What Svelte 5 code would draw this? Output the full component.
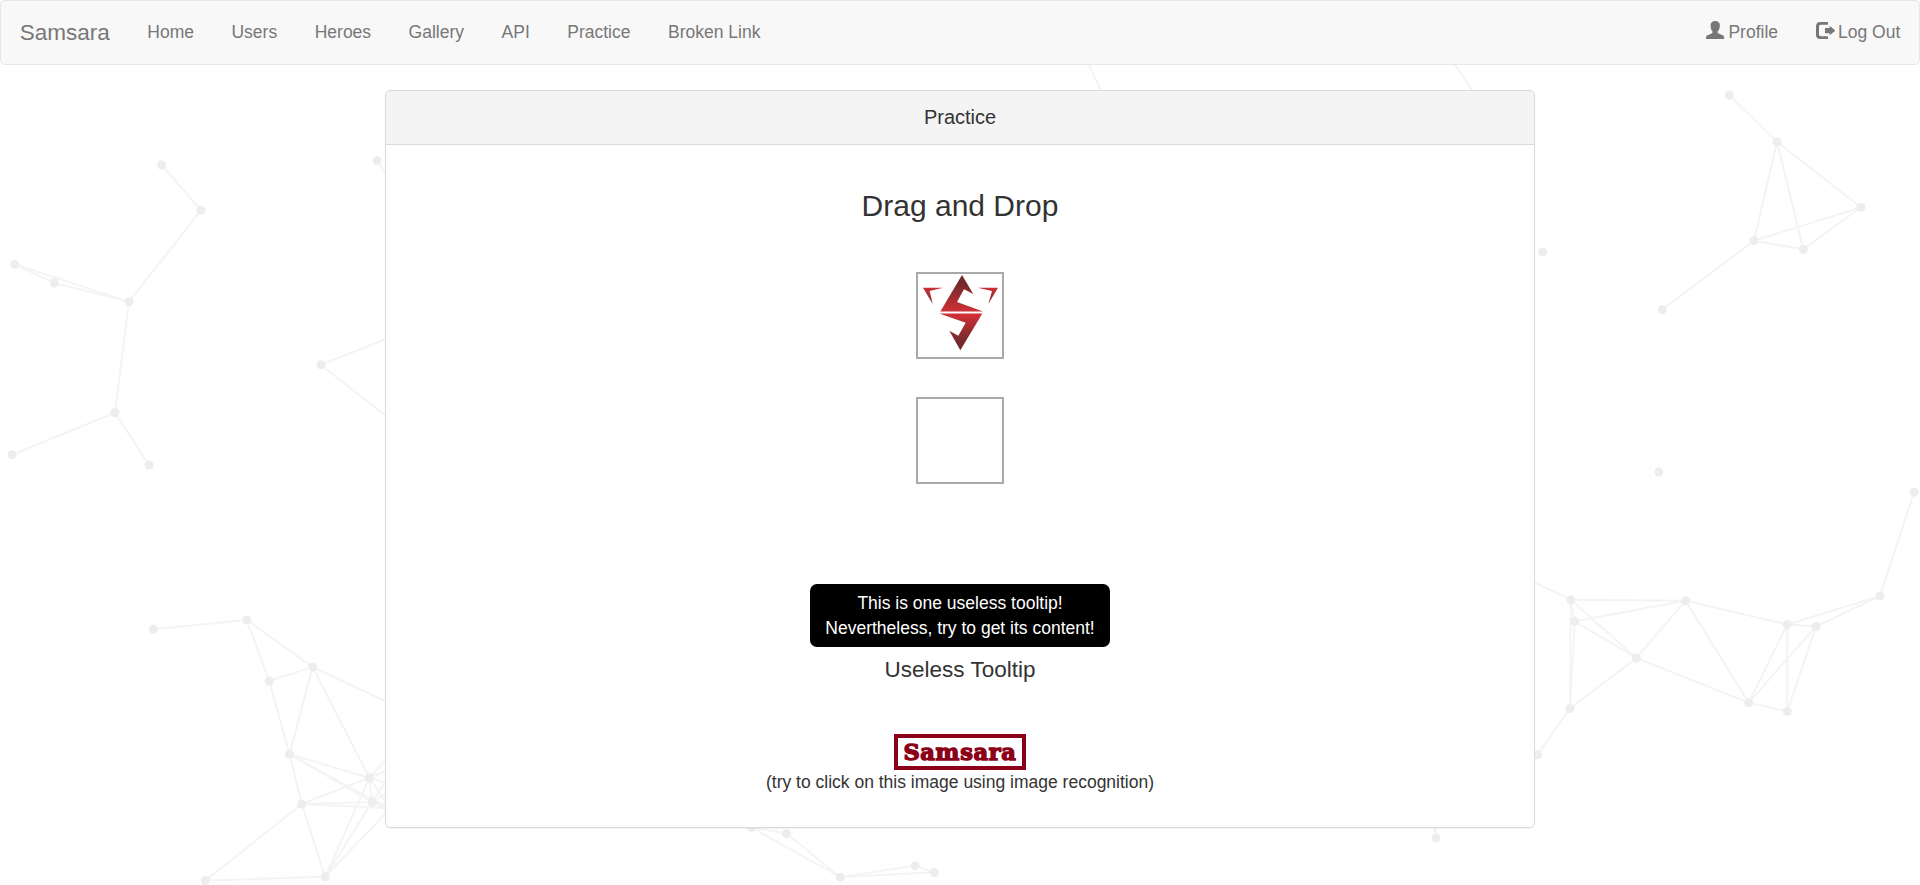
<script>
  const links = ['Home', 'Users', 'Heroes', 'Gallery', 'API', 'Practice', 'Broken Link'];

  const dots = [
    [161.7, 165], [201, 210.3], [129, 301.7], [54.3, 283], [14.7, 264.3], [115, 412.7], [12, 454.7], [149, 465],
    [377, 160.6], [321, 364.7],
    [153.3, 629.3], [246.8, 620], [312.7, 667], [269.2, 681], [289.5, 754.3], [369.3, 777.8], [301.7, 804],
    [372.2, 802], [325.2, 876.8], [205.3, 880.7],
    [1729.3, 95.3], [1777, 141.7], [1861, 207.3], [1754, 240.7], [1803.3, 249.3], [1662.3, 309.5], [1542.8, 252],
    [1658.7, 472], [1914, 492.3], [1880, 596], [1787.3, 624.5], [1816, 626.5], [1685.7, 600.7], [1570.7, 599.7],
    [1574.7, 621.3], [1636.3, 658], [1748.7, 702.7], [1787.3, 711.3], [1570, 708.5], [1537.5, 754.7],
    [751.5, 827.5], [786.5, 833.5], [840.3, 877.3], [915, 865.7], [934.3, 872.5], [1436, 838]
  ];

  const edges = [
    'M161.7 165L201 210.3L129 301.7L115 412.7L12 454.7M115 412.7L149 465M129 301.7L54.3 283L14.7 264.3L129 301.7',
    'M377 160.6L386 174M386 339L321 364.7L386 416',
    'M153.3 629.3L246.8 620L312.7 667L269.2 681L246.8 620',
    'M269.2 681L289.5 754.3L312.7 667L386 701.5M312.7 667L369.3 777.8',
    'M289.5 754.3L369.3 777.8L301.7 804L289.5 754.3L372.2 802L301.7 804',
    'M289.5 754.3L386 807M301.7 804L386 808',
    'M301.7 804L205.3 880.7L325.2 876.8L301.7 804',
    'M325.2 876.8L369.3 777.8L372.2 802L325.2 876.8L386 813',
    'M369.3 777.8L386 760M369.3 777.8L386 771M369.3 777.8L386 783M369.3 777.8L386 802',
    'M372.2 802L386 781M372.2 802L386 794M372.2 802L386 804M372.2 802L386 808',
    'M1729.3 95.3L1777 141.7L1861 207.3L1803.3 249.3L1777 141.7L1754 240.7L1861 207.3M1803.3 249.3L1754 240.7L1662.3 309.5',
    'M1534 582L1570.7 599.7L1685.7 600.7L1574.7 621.3L1570.7 599.7L1636.3 658L1574.7 621.3L1570 708.5L1570.7 599.7',
    'M1570 708.5L1636.3 658L1685.7 600.7L1748.7 702.7L1636.3 658M1570 708.5L1537.5 754.7',
    'M1685.7 600.7L1787.3 624.5L1816 626.5L1880 596L1914 492.3M1787.3 624.5L1880 596',
    'M1787.3 624.5L1748.7 702.7L1816 626.5L1787.3 711.3L1787.3 624.5M1748.7 702.7L1787.3 711.3',
    'M751.5 827.5L786.5 833.5L840 877L751.5 827.5M840 877L915 865.7L934 872.3L840 877',
    'M1088.4 64L1101.5 91M1454.500 64L1472.500 91M1433.5 827L1436 838L1435.5 827'
  ];
</script>

<svg class="network" viewBox="0 0 1920 885" aria-hidden="true">
  {#each edges as d}
    <path {d} />
  {/each}
  {#each dots as [cx, cy]}
    <circle {cx} {cy} r="4.5" />
  {/each}
</svg>

<div class="page">
  <nav class="navbar">
    <a class="brand" href="#home">Samsara</a>
    <ul class="nav">
      {#each links as label}
        <li><a href="#nav">{label}</a></li>
      {/each}
    </ul>
    <ul class="nav right">
      <li>
        <a href="#profile">
          <svg class="icon" viewBox="0 0 56 54"><path d="M28 0C35 0 42 4 42 13C42 21 39 28 35.500 31V35C37 38 46 40 51 43C55 46 55 49 55 54H0C0 49 0 46 4 43C9 40 18 38 19.500 35V31C16 28 14 21 14 13C14 4 21 0 28 0Z" /></svg>
          Profile
        </a>
      </li>
      <li>
        <a href="#logout">
          <svg class="icon out" viewBox="0 0 59 52"><path d="M36 0H13Q0 0 0 13V38Q0 51 13 51H36V43H14Q9 43 9 37V14Q9 8 14 8H36Z" /><path d="M27 18H41V11L59 26L41 40V34H27Z" /></svg>
          Log Out
        </a>
      </li>
    </ul>
  </nav>

  <main class="panel">
    <header>Practice</header>
    <div class="body">
      <h3>Drag and Drop</h3>
      <div class="box">
        <svg viewBox="114 72 252 249">
          <defs>
            <linearGradient id="red" gradientUnits="userSpaceOnUse" x1="0" y1="76" x2="0" y2="300">
              <stop offset="0.12" stop-color="#732a2d" />
              <stop offset="0.48" stop-color="#cf3036" />
              <stop offset="0.54" stop-color="#cf3036" />
              <stop offset="0.88" stop-color="#732a2d" />
            </linearGradient>
            <linearGradient id="ear" x1="0" y1="0" x2="0" y2="1">
              <stop offset="0" stop-color="#cb3036" />
              <stop offset="1" stop-color="#7d2a2e" />
            </linearGradient>
          </defs>
          <path fill="url(#red)" d="M246 75L280 132L252 118L231 156L309 184.500H181Z" />
          <path fill="url(#red)" d="M178 190.500H307L241 301L208 242L235 257L257 218Z" />
          <path fill="url(#ear)" d="M129 113H189L149 123L158 162Z" />
          <path fill="url(#ear)" d="M293 113H354L325 162L336 123Z" />
        </svg>
      </div>
      <div class="box second"></div>
      <div class="tooltip">This is one useless tooltip!<br />Nevertheless, try to get its content!</div>
      <h4>Useless Tooltip</h4>
      <div class="stamp"><span>Samsara</span></div>
      <p>(try to click on this image using image recognition)</p>
    </div>
  </main>
</div>

<style>
  :global(body) {
    background: #fff;
    overflow: hidden;
  }
  .network {
    position: absolute;
    inset: 0;
    width: 1920px;
    height: 885px;
  }
  .network path {
    fill: none;
    stroke: #f4f4f4;
    stroke-width: 2;
  }
  .network circle {
    fill: #ededed;
  }
  .page {
    position: relative;
    height: 885px;
    font: 17.5px/25px "Liberation Sans", Arial, sans-serif;
    color: #333;
  }
  .navbar {
    display: flex;
    box-sizing: border-box;
    height: 65px;
    border: 1px solid #e7e7e7;
    border-radius: 5px;
    background: #f8f8f8;
  }
  .navbar a {
    display: block;
    padding: 18.75px;
    color: #777;
    text-decoration: none;
    white-space: nowrap;
  }
  .navbar .brand {
    font-size: 22.5px;
  }
  .nav {
    display: flex;
    margin: 0;
    padding: 0;
    list-style: none;
  }
  .right {
    margin-left: auto;
  }
  .icon {
    width: 18.5px;
    height: 18px;
    margin-right: -1px;
    vertical-align: -1px;
    fill: #777;
  }
  .icon.out {
    width: 19.6px;
    height: 17.3px;
    margin-right: -2px;
    vertical-align: -1.7px;
  }
  .panel {
    box-sizing: border-box;
    width: 1150px;
    height: 738px;
    margin: 25px auto 0;
    border: 1px solid #dbdbdb;
    border-radius: 5px;
    background: #fff;
    box-shadow: 0 1px 1px rgba(0, 0, 0, 0.05);
    overflow: hidden;
  }
  header {
    box-sizing: border-box;
    height: 54px;
    padding-top: 12px;
    border-bottom: 1px solid #dbdbdb;
    background: #f4f4f4;
    font-size: 20px;
    line-height: 29px;
    text-align: center;
  }
  .body {
    display: flex;
    flex-direction: column;
    align-items: center;
  }
  h3 {
    margin: 44px 0 50px;
    font-size: 30px;
    font-weight: 400;
    line-height: 33px;
  }
  .box {
    box-sizing: border-box;
    width: 88px;
    height: 87px;
    border: 2px solid #a9a9a9;
  }
  .box svg {
    display: block;
    width: 84px;
    height: 83px;
  }
  .second {
    margin-top: 38px;
  }
  .tooltip {
    box-sizing: border-box;
    width: 300px;
    height: 63px;
    margin-top: 100px;
    padding: 7px 0;
    border-radius: 7px;
    background: #000;
    color: #fff;
    text-align: center;
  }
  h4 {
    margin: 10px 0 52px;
    font-size: 22.5px;
    font-weight: 400;
    line-height: 25px;
  }
  .stamp {
    display: flex;
    align-items: center;
    justify-content: center;
    box-sizing: border-box;
    width: 132px;
    height: 36px;
    border: 4px solid #8b0018;
    background: #fff;
    color: #8b0018;
    font: 700 22.5px/28px "DejaVu Serif", serif;
    letter-spacing: 0.7px;
    -webkit-text-stroke: 1.4px #8b0018;
  }
  p {
    margin: 0;
  }
</style>
